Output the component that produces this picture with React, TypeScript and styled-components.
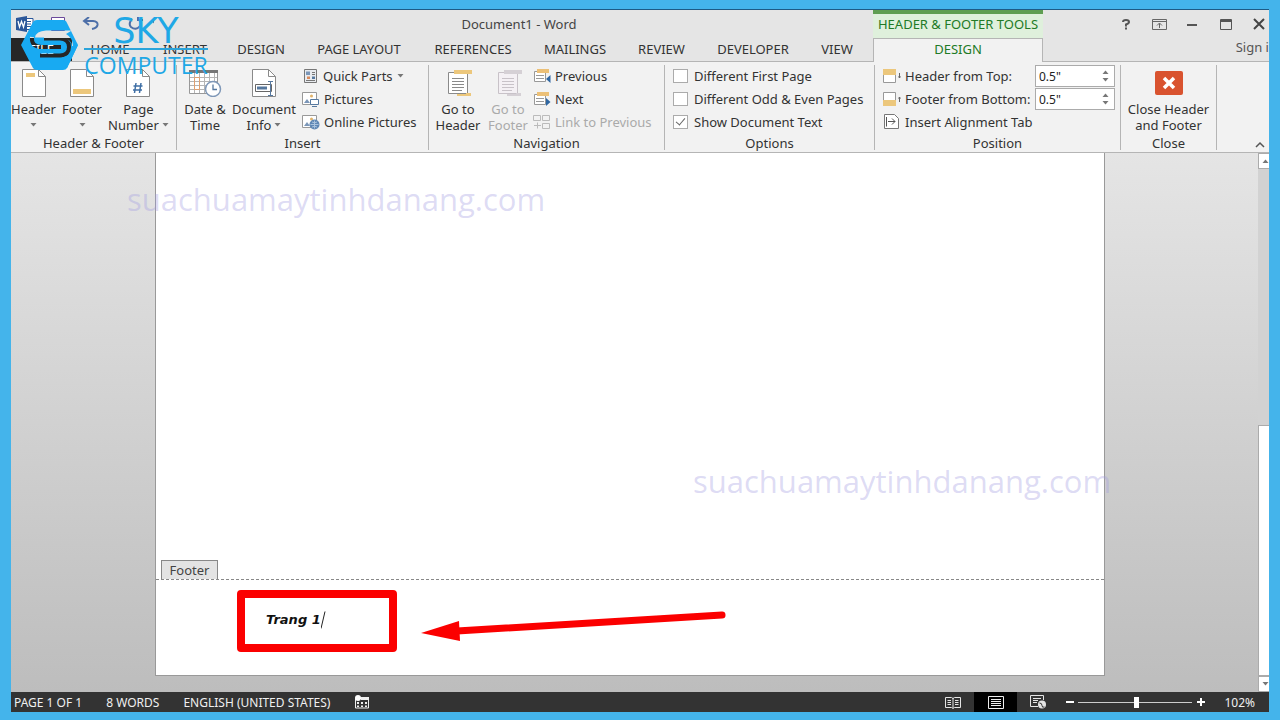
import React from "react";
import styled, { createGlobalStyle, css } from "styled-components";

const GlobalStyle = createGlobalStyle`
  *, *::before, *::after { box-sizing: border-box; }
  body { margin: 0; font-family: "Noto Sans", "Open Sans", sans-serif; font-size: 13px; color: #333; }
  button, input { font: inherit; color: inherit; }
`;

const Frame = styled.div`
  position: relative;
  display: flex;
  min-height: 100vh;
  padding: 10px 11px 8px;
  background: #44b4eb;
`;

const WordWindow = styled.div`
  flex: 1;
  min-width: 0;
  display: flex;
  flex-direction: column;
  overflow: hidden;
  background: #e5e5e5;
  box-shadow: 0 -1px 0 #1d5a85;
`;

const TitleBar = styled.header`
  display: flex;
  height: 28px;
  flex: none;
`;

const QuickAccess = styled.div`
  flex: 0 0 154px;
  display: flex;
  align-items: center;
  gap: 16px;
  padding-left: 5px;
`;

const PlainButton = styled.button`
  display: inline-flex;
  align-items: center;
  justify-content: center;
  padding: 0;
  border: 0;
  background: none;
`;

const Title = styled.h1`
  flex: 0 0 708px;
  margin: 0;
  text-align: center;
  font-size: 13px;
  font-weight: 400;
  line-height: 28px;
  color: #444;
`;

const ContextTitle = styled.div`
  flex: 0 0 170px;
  border-top: 4px solid #5f9e52;
  background: #dff0dc;
  color: #217a26;
  line-height: 21px;
  text-align: center;
  white-space: nowrap;
`;

const WindowControls = styled.div`
  flex: 1;
  display: flex;
  align-items: center;
  justify-content: flex-end;
  gap: 17px;
  padding-right: 3px;
  color: #555;
`;

const TabStrip = styled.nav`
  display: flex;
  flex: none;
  height: 24px;
  border-bottom: 1px solid #b5b5b5;
`;

const Tab = styled.button<{ $width: number; $kind?: "file" | "active" }>`
  flex: 0 0 ${(p) => p.$width}px;
  padding: 0;
  border: 0;
  background: none;
  color: #333;
  line-height: 23px;
  white-space: nowrap;
  ${(p) => p.$kind === "file" && css`background: #262626; color: #fff;`}
  ${(p) =>
    p.$kind === "active" &&
    css`
      height: 24px;
      padding-bottom: 2px;
      border: 1px solid #b5b5b5;
      border-bottom: 0;
      background: #f2f2f2;
      color: #217a26;
      line-height: 21px;
    `}
`;

const TabList = styled.div`
  flex: 0 0 862px;
  display: flex;
`;

const SignIn = styled.a`
  flex: 1;
  margin-right: -8px;
  color: #555;
  text-align: right;
  text-decoration: none;
  line-height: 18px;
  white-space: nowrap;
`;

const Ribbon = styled.section`
  display: flex;
  flex: none;
  height: 91px;
  padding: 3px 0 0;
  border-bottom: 1px solid #b5b5b5;
  background: #f2f2f2;
`;

const Group = styled.div<{ $width: number }>`
  flex: 0 0 ${(p) => p.$width}px;
  display: flex;
  flex-direction: column;
  height: 85px;
  border-right: 1px solid #b5b5b5;
`;

const GroupBody = styled.div<{ $pad?: number }>`
  display: flex;
  flex: none;
  height: 71px;
  padding-left: ${(p) => p.$pad ?? 0}px;
`;

const GroupLabel = styled.div`
  text-align: center;
  line-height: 15px;
`;

const BigButton = styled.button<{ $width: number; $dim?: boolean }>`
  flex: 0 0 ${(p) => p.$width}px;
  display: flex;
  flex-direction: column;
  align-items: center;
  padding: 0;
  border: 0;
  background: none;
  color: ${(p) => (p.$dim ? "#aaa" : "#333")};
  line-height: 16px;
  white-space: nowrap;
`;

const BigIcon = styled.span`
  display: flex;
  align-items: center;
  justify-content: center;
  height: 36px;
`;

const Line = styled.span`
  display: flex;
  align-items: center;
  justify-content: center;
  gap: 3px;
  height: 16px;
`;

const Rows = styled.div<{ $indent?: number }>`
  display: flex;
  flex-direction: column;
  gap: 1px;
  padding-left: ${(p) => p.$indent ?? 0}px;
`;

const RowButton = styled.button<{ $dim?: boolean }>`
  display: flex;
  align-items: center;
  gap: 4px;
  height: 22px;
  padding: 0;
  border: 0;
  background: none;
  color: ${(p) => (p.$dim ? "#aaa" : "#333")};
  white-space: nowrap;
`;

const CheckRow = styled.label`
  display: flex;
  align-items: center;
  gap: 6px;
  height: 22px;
  white-space: nowrap;
`;

const CheckBox = styled.input`
  appearance: none;
  display: flex;
  justify-content: center;
  width: 15px;
  height: 14px;
  margin: 0;
  border: 1px solid #ababab;
  background: #fff;
  &:checked::after {
    content: "";
    width: 5px;
    height: 9px;
    border: solid #666;
    border-width: 0 1px 1px 0;
    transform: rotate(40deg);
  }
`;

const FieldRow = styled.div`
  display: flex;
  align-items: center;
  width: 232px;
  height: 22px;
`;

const FieldLabel = styled.label`
  flex: 1;
  display: flex;
  align-items: center;
  gap: 4px;
  white-space: nowrap;
`;

const Spinner = styled.div`
  display: flex;
  flex: none;
  width: 80px;
  height: 22px;
  border: 1px solid #ababab;
  background: #fff;
`;

const SpinInput = styled.input`
  flex: 1;
  min-width: 0;
  padding: 0 3px;
  border: 0;
  outline: 0;
  background: none;
  color: #222;
  font-size: 12px;
`;

const SpinButtons = styled.div`
  display: flex;
  flex-direction: column;
  justify-content: space-evenly;
  width: 17px;
`;

const RibbonEnd = styled.div`
  flex: 1;
  display: flex;
  align-items: flex-end;
  justify-content: flex-end;
  padding: 0 4px 4px 0;
`;

const Workspace = styled.main`
  flex: 1;
  display: grid;
  grid-template-columns: 144px minmax(0, 1fr) 153px 11px;
  min-height: 539px;
  background: linear-gradient(#e5e5e5, #bdbdbd);
`;

const Page = styled.article`
  grid-column: 2;
  display: flex;
  flex-direction: column;
  margin-bottom: 16px;
  border: solid #999;
  border-width: 0 1px 1px;
  background: #fff;
`;

const PageBody = styled.div`
  flex: 1;
  display: flex;
  align-items: flex-end;
  padding-left: 5px;
`;

const FooterTag = styled.span`
  width: 57px;
  height: 19px;
  border: 1px solid #888;
  border-bottom: 0;
  background: #e3e3e3;
  color: #444;
  line-height: 18px;
  text-align: center;
`;

const PageFooter = styled.footer`
  display: flex;
  align-items: flex-start;
  gap: 24px;
  height: 96px;
  padding: 10px 0 0 81px;
  border-top: 1px dashed #888;
`;

const Highlight = styled.div`
  display: flex;
  align-items: center;
  width: 160px;
  height: 62px;
  padding: 0 0 3px 21px;
  border: 8px solid #fb0000;
  border-radius: 4px;
  color: #111;
  font: italic bold 13px "DejaVu Sans", sans-serif;
`;

const Scrollbar = styled.div`
  grid-column: 4;
  display: flex;
  flex-direction: column;
  background: #d2d2d2;
`;

const ScrollArrow = styled.button`
  display: flex;
  align-items: center;
  justify-content: flex-end;
  height: 16px;
  padding: 0;
  border: 1px solid #ababab;
  border-right: 0;
  background: #fff;
`;

const ScrollThumb = styled.div`
  height: 251px;
  margin-top: auto;
  border: 1px solid #ababab;
  border-right: 0;
  background: #fff;
`;

const StatusBar = styled.footer`
  display: flex;
  flex: none;
  align-items: center;
  height: 20px;
  padding: 0 14px 0 3px;
  background: #333;
  color: #f0f0f0;
  font-size: 12px;
  white-space: nowrap;
`;

const StatusItems = styled.div`
  flex: 1;
  display: flex;
  align-items: center;
  gap: 24px;
`;

const ViewButton = styled.button<{ $active?: boolean }>`
  display: flex;
  align-items: center;
  justify-content: center;
  width: 43px;
  height: 20px;
  padding: 0;
  border: 0;
  background: ${(p) => (p.$active ? "#000" : "none")};
`;

const Zoom = styled.div`
  display: flex;
  align-items: center;
  gap: 4px;
  padding: 0 18px 0 6px;
`;

const ZoomRange = styled.input`
  appearance: none;
  width: 114px;
  height: 12px;
  margin: 0;
  background: linear-gradient(#ccc, #ccc) center / 100% 1px no-repeat;
  &::-webkit-slider-thumb {
    appearance: none;
    width: 5px;
    height: 11px;
    background: #fff;
  }
`;

const Watermark = styled.span<{ $x: string; $y: number }>`
  position: absolute;
  left: ${(p) => p.$x};
  top: ${(p) => p.$y}px;
  color: rgba(160, 155, 225, 0.36);
  font-family: "Open Sans", sans-serif;
  font-size: 31px;
  line-height: 44px;
  white-space: nowrap;
  pointer-events: none;
`;

const Brand = styled.div`
  position: absolute;
  left: 20px;
  top: 16px;
  display: flex;
  gap: 5px;
  color: #1fa8e6;
  pointer-events: none;
`;

const BrandWords = styled.div`
  display: flex;
  flex-direction: column;
  align-items: center;
  width: 124px;
  font-family: "Open Sans", sans-serif;
`;

const BrandTop = styled.span`
  height: 32px;
  font: 35px/30px "DejaVu Sans", sans-serif;
`;

const BrandRule = styled.span`
  width: 124px;
  height: 2px;
  background: #2ba4da;
`;

const BrandBottom = styled.span`
  font-size: 23px;
  line-height: 30px;
`;

const Caret = ({ up = false }: { up?: boolean }) => (
  <svg width="7" height="4" viewBox="0 0 7 4">
    <path d={up ? "M0.5 4 3.5 0.5 6.5 4z" : "M0.5 0 3.5 3.5 6.5 0z"} fill="#777" />
  </svg>
);

const PageIcon = ({ children }: { children: React.ReactNode }) => (
  <svg width="26" height="28" viewBox="0 0 26 28" fill="none">
    <path d="M1.500 .5H17.500L24.500 7.500V27.500H1.500z" fill="#fff" stroke="#8a8a8a" />
    <path d="M17.500 .5V7.500H24.500" stroke="#8a8a8a" />
    {children}
  </svg>
);

const CalendarIcon = () => (
  <svg width="34" height="28" viewBox="0 0 34 28" fill="none">
    <path d="M1.500 2.500H29.500V24.500H1.500z" fill="#fff" stroke="#999" />
    <path d="M1 1H30V4H1z" fill="#777" />
    <path d="M6.500 4V24M11.500 4V24M16.500 4V24M21.500 4V24M26.500 4V24M2 8.500H29M2 12.500H29M2 16.500H29M2 20.500H29" stroke="#b5b5b5" />
    <path d="M6.500 8.500H11.500V20.500H6.500z" stroke="#e0a070" />
    <circle cx="25" cy="20" r="7.500" fill="#fff" stroke="#7f98b8" strokeWidth="1.500" />
    <path d="M25 15.500V20.500H29" stroke="#56789f" strokeWidth="1.300" />
  </svg>
);

const GoToIcon = ({ dim = false }: { dim?: boolean }) => (
  <svg width="28" height="28" viewBox="0 0 28 28" fill="none">
    <path d="M4.500 3.500H23.500V24.500H4.500z" fill={dim ? "#f4f0f4" : "#fff"} stroke={dim ? "#c8c2c8" : "#8a8a8a"} />
    <path d="M10 1H28V5H10z" fill={dim ? "#d5d0d5" : "#ecc77c"} />
    <path d="M22 24H27V27H13V25H22z" fill={dim ? "#d5d0d5" : "#ecc77c"} />
    <path d="M8 9.500H20M8 12.500H20M8 15.500H20M8 18.500H20M8 21.500H18" stroke={dim ? "#c8c2c8" : "#8a8a8a"} />
  </svg>
);

const QuickPartsIcon = () => (
  <svg width="17" height="16" viewBox="0 0 17 16" fill="none">
    <path d="M2.500 1.500H14.500V14.500H2.500z" fill="#e8ebef" stroke="#777" />
    <path d="M4 3.500H8V7H4z" fill="#7b96b8" />
    <path d="M10 4.500H13M10 6.500H13M4 12.500H13" stroke="#777" />
    <path d="M5 8.500H8V11H5z" fill="#d98a5c" />
    <path d="M10 8.500H13V11H10z" fill="#56789f" />
  </svg>
);

const PictureIcon = ({ online = false }: { online?: boolean }) => (
  <svg width="18" height="16" viewBox="1 0 18 16" fill="none">
    <path d="M1.500 1.500H15.500V13.500H1.500z" fill="#fff" stroke="#999" />
    <path d="M3 12 6 8 9 12z" fill="#7b96b8" />
    <circle cx="10.500" cy="5" r="1.500" fill="#e2b36a" />
    {online ? (
      <>
        <circle cx="13.500" cy="10.500" r="5" fill="#5f87b5" />
        <path d="M9.500 10.500H17.500M13.500 6.500V14.500M11 8Q13.500 9.500 16 8M11 13Q13.500 11.500 16 13" stroke="#a9c2dd" />
      </>
    ) : (
      <>
        <path d="M9.500 8.500H17.500V13.500H9.500z" fill="#fff" stroke="#56789f" />
        <path d="M11 15.500H16" stroke="#56789f" />
      </>
    )}
  </svg>
);

const StepIcon = ({ next = false }: { next?: boolean }) => (
  <svg width="18" height="16" viewBox="0 0 18 16" fill="none">
    <path d="M1.500 3.500H12.500V13.500H1.500z" fill="#fff" stroke="#999" />
    <path d="M4 1H16V5H4z" fill="#ecc077" />
    <path d="M3 7.500H11M3 10.500H11" stroke="#999" />
    <path d={next ? "M13 7V15L17.500 11z" : "M17.500 7V15L13 11z"} fill="#2f67a3" />
  </svg>
);

const LinkIcon = () => (
  <svg width="18" height="16" viewBox="0 0 18 16" fill="none" stroke="#bbb">
    <path d="M.5 1.500H7.500V6.500H.5zM9.500 1.500H16.500V6.500H9.500zM9.500 9.500H16.500V14.500H9.500z" />
    <path d="M1 11.500H8M4.500 8.500V14.500" />
  </svg>
);

const MarginIcon = ({ bottom = false }: { bottom?: boolean }) => (
  <svg width="18" height="16" viewBox="0 0 18 16" fill="none">
    <path d="M.5 1.500H12.500V14.500H.5z" fill="#fff" stroke="#999" />
    <path d={bottom ? "M0 9H13V15H0z" : "M0 1H13V7H0z"} fill="#ecc77c" />
    <path d={bottom ? "M16.500 6V11M15.500 7.500 16.500 6 17.500 7.500" : "M16.500 5V10M15.500 8.500 16.500 10 17.500 8.500"} stroke="#666" />
  </svg>
);

const AlignTabIcon = () => (
  <svg width="18" height="16" viewBox="0 0 18 16" fill="none" stroke="#777">
    <path d="M1.500 .5H11.500L15.500 4.500V14.500H1.500z" fill="#fff" />
    <path d="M3.500 3V12.500M5 7.500H12M9 4.500 12 7.500 9 10.500" stroke="#555" />
  </svg>
);

const BrandMark = () => (
  <svg width="59" height="56" viewBox="20 16 59 56" fill="none">
    <mask id="brand-cut" maskUnits="userSpaceOnUse" x="20" y="16" width="59" height="56">
      <path d="M21 45 33 22Q34 20 37 20H63Q66 20 67 23L78 45 67 68Q66 70 63 70H37Q34 70 33 68z" fill="#fff" />
      <path d="M76 30.500H46Q36 31 35 37.500H61Q72 39 72 46L78 45 74 30z" fill="#000" />
      <path d="M32 37Q31 47 42 47H61" stroke="#000" strokeWidth="4" />
      <path d="M44 38.500H60Q69 39 69 47T60 55.500H40" stroke="#000" strokeWidth="4" />
    </mask>
    <path d="M20 16H79V72H20z" fill="#18aaf2" mask="url(#brand-cut)" />
    <path d="M66 34Q73 38 73 46 73 55 62 57.500L67 68 78 45 71 31z" fill="#18aaf2" />
  </svg>
);

const tabs: [string, number][] = [
  ["HOME", 76],
  ["INSERT", 74],
  ["DESIGN", 78],
  ["PAGE LAYOUT", 118],
  ["REFERENCES", 110],
  ["MAILINGS", 94],
  ["REVIEW", 79],
  ["DEVELOPER", 104],
  ["VIEW", 64],
];

const MarginField = ({ id, label, bottom }: { id: string; label: string; bottom?: boolean }) => (
  <FieldRow>
    <FieldLabel htmlFor={id}>
      <MarginIcon bottom={bottom} />
      {label}
    </FieldLabel>
    <Spinner>
      <SpinInput id={id} type="text" defaultValue={'0.5"'} />
      <SpinButtons>
        <PlainButton aria-label="Increase"><Caret up /></PlainButton>
        <PlainButton aria-label="Decrease"><Caret /></PlainButton>
      </SpinButtons>
    </Spinner>
  </FieldRow>
);

export default function App() {
  return (
    <Frame>
      <GlobalStyle />
      <WordWindow>
        <TitleBar>
          <QuickAccess>
            <svg width="18" height="16" viewBox="0 0 18 16" fill="none">
              <path d="M9.500 2.500H17V13.500H9.500z" fill="#fff" stroke="#2b579a" />
              <path d="M11 5.500H15M11 8H15M11 10.500H15" stroke="#2b579a" />
              <path d="M0 2 11 0V16L0 14z" fill="#2b579a" />
              <path d="M2 5 3.500 11 5.500 5.500 7.500 11 9 5" stroke="#fff" strokeWidth="1.300" />
            </svg>
            <PlainButton aria-label="Save">
              <svg width="16" height="14" viewBox="0 0 16 14" fill="none">
                <path d="M1.500 .5H14.500V13.500H1.500z" fill="#fff" stroke="#6b4a9b" />
              </svg>
            </PlainButton>
            <PlainButton aria-label="Undo">
              <svg width="18" height="14" viewBox="0 0 18 14" fill="none" stroke="#4d6fa8" strokeWidth="2">
                <path d="M7 0 2 4 7 8M2 4H11Q16 4.500 15.500 8 15 11 10 12" />
              </svg>
            </PlainButton>
            <PlainButton aria-label="Redo">
              <svg width="38" height="14" viewBox="-14 0 38 14" fill="none" stroke="#4d6fa8" strokeWidth="2">
                <path d="M2 2Q-2 7 1 10 6 14 10 9 12 5 8 2M8 -1V3H13" />
                <path d="M21 3H28L24.500 7z" fill="#4d6fa8" stroke="none" />
              </svg>
            </PlainButton>
          </QuickAccess>
          <Title>Document1 - Word</Title>
          <ContextTitle>HEADER &amp; FOOTER TOOLS</ContextTitle>
          <WindowControls>
            <PlainButton aria-label="Help">
              <svg width="16" height="14" viewBox="0 0 16 14" fill="none" stroke="#555" strokeWidth="2">
                <path d="M5 5Q5 3 8 3T11 5Q11 6.500 8 7.500V9.500M8 10.500V12.500" />
              </svg>
            </PlainButton>
            <PlainButton aria-label="Ribbon display options">
              <svg width="16" height="11" viewBox="0 0 16 11" fill="none" stroke="#666">
                <path d="M1.500 .5H15.500V10.500H1.500zM1.500 2.500H15.500M8.500 9V4.500M6 6.500 8.500 4 11 6.500" />
              </svg>
            </PlainButton>
            <PlainButton aria-label="Minimize">
              <svg width="16" height="10" viewBox="0 0 16 10">
                <path d="M3 5H13V7H3z" fill="#555" />
              </svg>
            </PlainButton>
            <PlainButton aria-label="Maximize">
              <svg width="16" height="11" viewBox="0 0 16 11" fill="none" stroke="#555">
                <path d="M3.500 .5H14.500V10.500H3.500zM3 1.500H15M3 2.500H15" />
              </svg>
            </PlainButton>
            <PlainButton aria-label="Close">
              <svg width="16" height="12" viewBox="0 0 16 12" fill="none" stroke="#444" strokeWidth="2">
                <path d="M4 1 14 11M14 1 4 11" />
              </svg>
            </PlainButton>
          </WindowControls>
        </TitleBar>

        <TabStrip>
          <TabList>
            <Tab $width={61} $kind="file">FILE</Tab>
            {tabs.map(([name, width]) => (
              <Tab key={name} $width={width}>{name}</Tab>
            ))}
          </TabList>
          <Tab $width={170} $kind="active">DESIGN</Tab>
          <SignIn href="#">Sign in</SignIn>
        </TabStrip>

        <Ribbon>
          <Group $width={166}>
            <GroupBody>
              <BigButton $width={45}>
                <BigIcon><PageIcon><path d="M5 4H14V8H5z" fill="#ecc77c" /></PageIcon></BigIcon>
                <Line>Header</Line>
                <Line><Caret /></Line>
              </BigButton>
              <BigButton $width={52}>
                <BigIcon><PageIcon><path d="M4 20H22V25H4z" fill="#ecc77c" /></PageIcon></BigIcon>
                <Line>Footer</Line>
                <Line><Caret /></Line>
              </BigButton>
              <BigButton $width={60}>
                <BigIcon>
                  <PageIcon>
                    <path d="M11 14 9.500 24M16 14 14.500 24M8.500 17H17.500M8 21H17" stroke="#3f6fa5" strokeWidth="1.500" />
                  </PageIcon>
                </BigIcon>
                <Line>Page</Line>
                <Line>Number <Caret /></Line>
              </BigButton>
            </GroupBody>
            <GroupLabel>Header &amp; Footer</GroupLabel>
          </Group>

          <Group $width={252}>
            <GroupBody $pad={3}>
              <BigButton $width={50}>
                <BigIcon><CalendarIcon /></BigIcon>
                <Line>Date &amp;</Line>
                <Line>Time</Line>
              </BigButton>
              <BigButton $width={68}>
                <BigIcon>
                  <PageIcon>
                    <path d="M4.500 15.500H20.500V22.500H4.500z" fill="#fff" stroke="#666" />
                    <path d="M6 17.500H16V20.500H6z" fill="#56789f" />
                    <path d="M19.500 13V26M17 12.500H22M17 26.500H22" stroke="#56789f" />
                  </PageIcon>
                </BigIcon>
                <Line>Document</Line>
                <Line>Info <Caret /></Line>
              </BigButton>
              <Rows $indent={4}>
                <RowButton><QuickPartsIcon /> Quick Parts <Caret /></RowButton>
                <RowButton><PictureIcon /> Pictures</RowButton>
                <RowButton><PictureIcon online /> Online Pictures</RowButton>
              </Rows>
            </GroupBody>
            <GroupLabel>Insert</GroupLabel>
          </Group>

          <Group $width={236}>
            <GroupBody $pad={4}>
              <BigButton $width={50}>
                <BigIcon><GoToIcon /></BigIcon>
                <Line>Go to</Line>
                <Line>Header</Line>
              </BigButton>
              <BigButton $width={50} $dim disabled>
                <BigIcon><GoToIcon dim /></BigIcon>
                <Line>Go to</Line>
                <Line>Footer</Line>
              </BigButton>
              <Rows>
                <RowButton><StepIcon /> Previous</RowButton>
                <RowButton><StepIcon next /> Next</RowButton>
                <RowButton $dim disabled><LinkIcon /> Link to Previous</RowButton>
              </Rows>
            </GroupBody>
            <GroupLabel>Navigation</GroupLabel>
          </Group>

          <Group $width={210}>
            <GroupBody $pad={8}>
              <Rows>
                <CheckRow><CheckBox type="checkbox" /> Different First Page</CheckRow>
                <CheckRow><CheckBox type="checkbox" /> Different Odd &amp; Even Pages</CheckRow>
                <CheckRow><CheckBox type="checkbox" defaultChecked /> Show Document Text</CheckRow>
              </Rows>
            </GroupBody>
            <GroupLabel>Options</GroupLabel>
          </Group>

          <Group $width={246}>
            <GroupBody $pad={8}>
              <Rows>
                <MarginField id="header-top" label="Header from Top:" />
                <MarginField id="footer-bottom" label="Footer from Bottom:" bottom />
                <RowButton><AlignTabIcon /> Insert Alignment Tab</RowButton>
              </Rows>
            </GroupBody>
            <GroupLabel>Position</GroupLabel>
          </Group>

          <Group $width={96}>
            <GroupBody>
              <BigButton $width={95}>
                <BigIcon>
                  <svg width="28" height="24" viewBox="0 0 28 24">
                    <rect width="28" height="24" rx="2" fill="#d9532f" />
                    <path d="M9 7 19 17M19 7 9 17" stroke="#fff" strokeWidth="3.500" />
                  </svg>
                </BigIcon>
                <Line>Close Header</Line>
                <Line>and Footer</Line>
              </BigButton>
            </GroupBody>
            <GroupLabel>Close</GroupLabel>
          </Group>
          <RibbonEnd>
            <PlainButton aria-label="Collapse the ribbon">
              <svg width="10" height="7" viewBox="0 0 10 7" fill="none" stroke="#555" strokeWidth="1.500">
                <path d="M1 6 5 2 9 6" />
              </svg>
            </PlainButton>
          </RibbonEnd>
        </Ribbon>

        <Workspace>
          <Page>
            <PageBody><FooterTag>Footer</FooterTag></PageBody>
            <PageFooter>
              <Highlight>
                Trang 1
                <svg width="5" height="18" viewBox="1 0 5 18"><path d="M1 17.500 5 .5" stroke="#222" /></svg>
              </Highlight>
              <svg width="306" height="56" viewBox="0 0 306 56">
                <path d="M36 41 301 25" stroke="#fb0000" strokeWidth="7" strokeLinecap="round" />
                <path d="M0 43 38 31 39 51z" fill="#fb0000" />
              </svg>
            </PageFooter>
          </Page>
          <Scrollbar>
            <ScrollArrow aria-label="Scroll up"><Caret up /></ScrollArrow>
            <ScrollThumb />
            <ScrollArrow aria-label="Scroll down"><Caret /></ScrollArrow>
          </Scrollbar>
        </Workspace>

        <StatusBar>
          <StatusItems>
            <span>PAGE 1 OF 1</span>
            <span>8 WORDS</span>
            <span>ENGLISH (UNITED STATES)</span>
            <svg width="16" height="14" viewBox="0 0 16 14" fill="none">
              <path d="M1.500 3.500H14.500V13H1.500z" stroke="#eee" />
              <path d="M7 2H15V5H7zM3 7H5V9H3zM7 7H9V9H7zM11 7H13V9H11zM3 10.500H5V12H3zM7 10.500H9V12H7zM11 10.500H13V12H11z" fill="#eee" />
              <circle cx="4" cy="3" r="3" fill="#fff" />
            </svg>
          </StatusItems>
          <ViewButton aria-label="Read mode">
            <svg width="16" height="13" viewBox="0 0 16 13" fill="none" stroke="#e5e5e5">
              <path d="M.5 1.500H6.500L8 2.500 9.500 1.500H15.500V11.500H9.500L8 12.500 6.500 11.500H.5zM8 2V12M2.500 4.500H6M2.500 6.500H6M2.500 8.500H6M10 4.500H13.500M10 6.500H13.500M10 8.500H13.500" />
            </svg>
          </ViewButton>
          <ViewButton $active aria-label="Print layout">
            <svg width="16" height="13" viewBox="0 0 16 13" fill="none" stroke="#eee">
              <path d="M.5 .5H15.500V12.500H.5zM3 3.500H13M3 5.500H13M3 7.500H13M3 9.500H13" />
            </svg>
          </ViewButton>
          <ViewButton aria-label="Web layout">
            <svg width="17" height="14" viewBox="0 0 17 14" fill="none" stroke="#e5e5e5">
              <path d="M8 11.500H.5V.5H13.500V5M3 3.500H11M3 5.500H8M3 7.500H7" />
              <circle cx="12" cy="9.500" r="4" fill="#e5e5e5" stroke="none" />
              <path d="M9.500 8Q12 8 12 10.500T14.500 12" stroke="#333" />
            </svg>
          </ViewButton>
          <Zoom>
            <PlainButton aria-label="Zoom out">
              <svg width="8" height="10" viewBox="0 0 8 10"><path d="M0 4H8V6H0z" fill="#fff" /></svg>
            </PlainButton>
            <ZoomRange type="range" min={0} max={100} defaultValue={51} aria-label="Zoom" />
            <PlainButton aria-label="Zoom in">
              <svg width="10" height="10" viewBox="0 0 10 10"><path d="M1 4H4V1H6V4H9V6H6V9H4V6H1z" fill="#fff" /></svg>
            </PlainButton>
          </Zoom>
          <span>102%</span>
        </StatusBar>
      </WordWindow>

      <Watermark $x="127px" $y={177}>suachuamaytinhdanang.com</Watermark>
      <Watermark $x="693px" $y={459}>suachuamaytinhdanang.com</Watermark>
      <Brand>
        <BrandMark />
        <BrandWords>
          <BrandTop>SKY</BrandTop>
          <BrandRule />
          <BrandBottom>COMPUTER</BrandBottom>
        </BrandWords>
      </Brand>
    </Frame>
  );
}
